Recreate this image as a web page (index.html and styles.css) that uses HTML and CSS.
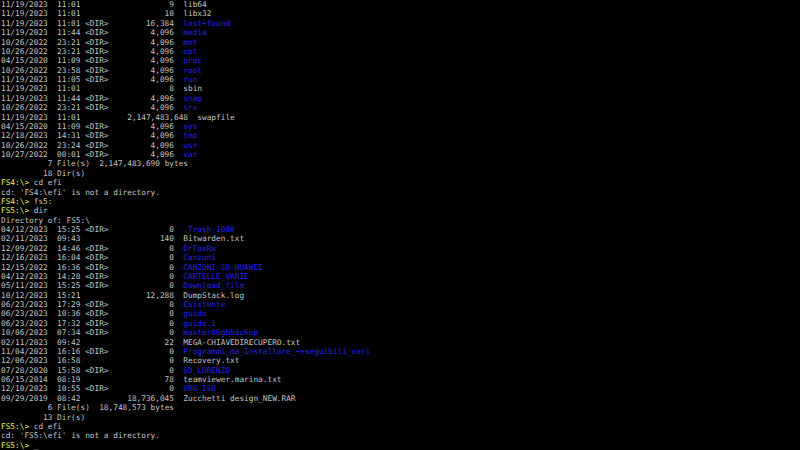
FILE: index.html
```html
<!DOCTYPE html>
<html lang="en">
<head>
    <meta charset="UTF-8">
    <meta name="viewport" content="width=device-width, initial-scale=1.0">
    <title>UEFI Shell</title>
    <link rel="stylesheet" href="styles.css">
</head>
<body>
    <div class="console">
        <!-- tail of FS4: listing -->
        <div class="entry"><span class="date">11/19/2023</span><span class="time">11:01</span><span class="type"></span><span class="size">9</span><span class="name">lib64</span></div>
        <div class="entry"><span class="date">11/19/2023</span><span class="time">11:01</span><span class="type"></span><span class="size">10</span><span class="name">libx32</span></div>
        <div class="entry dir"><span class="date">11/19/2023</span><span class="time">11:01</span><span class="type">&lt;DIR&gt;</span><span class="size">16,384</span><span class="name">lost+found</span></div>
        <div class="entry dir"><span class="date">11/19/2023</span><span class="time">11:44</span><span class="type">&lt;DIR&gt;</span><span class="size">4,096</span><span class="name">media</span></div>
        <div class="entry dir"><span class="date">10/26/2022</span><span class="time">23:21</span><span class="type">&lt;DIR&gt;</span><span class="size">4,096</span><span class="name">mnt</span></div>
        <div class="entry dir"><span class="date">10/26/2022</span><span class="time">23:21</span><span class="type">&lt;DIR&gt;</span><span class="size">4,096</span><span class="name">opt</span></div>
        <div class="entry dir"><span class="date">04/15/2020</span><span class="time">11:09</span><span class="type">&lt;DIR&gt;</span><span class="size">4,096</span><span class="name">proc</span></div>
        <div class="entry dir"><span class="date">10/26/2022</span><span class="time">23:58</span><span class="type">&lt;DIR&gt;</span><span class="size">4,096</span><span class="name">root</span></div>
        <div class="entry dir"><span class="date">11/19/2023</span><span class="time">11:05</span><span class="type">&lt;DIR&gt;</span><span class="size">4,096</span><span class="name">run</span></div>
        <div class="entry"><span class="date">11/19/2023</span><span class="time">11:01</span><span class="type"></span><span class="size">8</span><span class="name">sbin</span></div>
        <div class="entry dir"><span class="date">11/19/2023</span><span class="time">11:44</span><span class="type">&lt;DIR&gt;</span><span class="size">4,096</span><span class="name">snap</span></div>
        <div class="entry dir"><span class="date">10/26/2022</span><span class="time">23:21</span><span class="type">&lt;DIR&gt;</span><span class="size">4,096</span><span class="name">srv</span></div>
        <div class="entry"><span class="date">11/19/2023</span><span class="time">11:01</span><span class="type"></span><span class="size wide">2,147,483,648</span><span class="name">swapfile</span></div>
        <div class="entry dir"><span class="date">04/15/2020</span><span class="time">11:09</span><span class="type">&lt;DIR&gt;</span><span class="size">4,096</span><span class="name">sys</span></div>
        <div class="entry dir"><span class="date">12/18/2023</span><span class="time">14:31</span><span class="type">&lt;DIR&gt;</span><span class="size">4,096</span><span class="name">tmp</span></div>
        <div class="entry dir"><span class="date">10/26/2022</span><span class="time">23:24</span><span class="type">&lt;DIR&gt;</span><span class="size">4,096</span><span class="name">usr</span></div>
        <div class="entry dir"><span class="date">10/27/2022</span><span class="time">00:01</span><span class="type">&lt;DIR&gt;</span><span class="size">4,096</span><span class="name">var</span></div>
        <div class="line"><span class="count">7</span> File(s)  2,147,483,690 bytes</div>
        <div class="line"><span class="count">18</span> Dir(s)</div>

        <div class="line"><span class="prompt">FS4:\&gt;</span> cd efi</div>
        <div class="line">cd: 'FS4:\efi' is not a directory.</div>
        <div class="line"><span class="prompt">FS4:\&gt;</span> fs5:</div>
        <div class="line"><span class="prompt">FS5:\&gt;</span> dir</div>
        <div class="line">Directory of: FS5:\</div>

        <!-- FS5: listing -->
        <div class="entry dir"><span class="date">04/12/2023</span><span class="time">15:25</span><span class="type">&lt;DIR&gt;</span><span class="size">0</span><span class="name">.Trash-1000</span></div>
        <div class="entry"><span class="date">02/11/2023</span><span class="time">09:43</span><span class="type"></span><span class="size">140</span><span class="name">Bitwarden.txt</span></div>
        <div class="entry dir"><span class="date">12/09/2022</span><span class="time">14:46</span><span class="type">&lt;DIR&gt;</span><span class="size">0</span><span class="name">BrFaxRx</span></div>
        <div class="entry dir"><span class="date">12/16/2023</span><span class="time">16:04</span><span class="type">&lt;DIR&gt;</span><span class="size">0</span><span class="name">Canzoni</span></div>
        <div class="entry dir"><span class="date">12/15/2022</span><span class="time">16:36</span><span class="type">&lt;DIR&gt;</span><span class="size">0</span><span class="name">CANZONI-SD-HUAWEI</span></div>
        <div class="entry dir"><span class="date">04/12/2023</span><span class="time">14:28</span><span class="type">&lt;DIR&gt;</span><span class="size">0</span><span class="name">CARTELLE_VARIE</span></div>
        <div class="entry dir"><span class="date">05/11/2023</span><span class="time">15:25</span><span class="type">&lt;DIR&gt;</span><span class="size">0</span><span class="name">Download_film</span></div>
        <div class="entry"><span class="date">10/12/2023</span><span class="time">15:21</span><span class="type"></span><span class="size">12,288</span><span class="name">DumpStack.log</span></div>
        <div class="entry dir"><span class="date">06/23/2023</span><span class="time">17:29</span><span class="type">&lt;DIR&gt;</span><span class="size">0</span><span class="name">Esistente</span></div>
        <div class="entry dir"><span class="date">06/23/2023</span><span class="time">10:36</span><span class="type">&lt;DIR&gt;</span><span class="size">0</span><span class="name">guido</span></div>
        <div class="entry dir"><span class="date">06/23/2023</span><span class="time">17:32</span><span class="type">&lt;DIR&gt;</span><span class="size">0</span><span class="name">guido.1</span></div>
        <div class="entry dir"><span class="date">10/06/2023</span><span class="time">07:34</span><span class="type">&lt;DIR&gt;</span><span class="size">0</span><span class="name">maxtor80gbbackup</span></div>
        <div class="entry"><span class="date">02/11/2023</span><span class="time">09:42</span><span class="type"></span><span class="size">22</span><span class="name">MEGA-CHIAVEDIRECUPERO.txt</span></div>
        <div class="entry dir"><span class="date">11/04/2023</span><span class="time">16:16</span><span class="type">&lt;DIR&gt;</span><span class="size">0</span><span class="name">Programmi_da_Installare_+eseguibili_vari</span></div>
        <div class="entry"><span class="date">12/06/2023</span><span class="time">16:58</span><span class="type"></span><span class="size">0</span><span class="name">Recovery.txt</span></div>
        <div class="entry dir"><span class="date">07/28/2020</span><span class="time">15:58</span><span class="type">&lt;DIR&gt;</span><span class="size">0</span><span class="name">SD_LORENZO</span></div>
        <div class="entry"><span class="date">06/15/2014</span><span class="time">08:19</span><span class="type"></span><span class="size">78</span><span class="name">teamviewer.marina.txt</span></div>
        <div class="entry dir"><span class="date">12/10/2023</span><span class="time">10:55</span><span class="type">&lt;DIR&gt;</span><span class="size">0</span><span class="name">VBG_ISO</span></div>
        <div class="entry"><span class="date">09/29/2019</span><span class="time">08:42</span><span class="type"></span><span class="size">18,736,045</span><span class="name">Zucchetti design_NEW.RAR</span></div>
        <div class="line"><span class="count">6</span> File(s)  18,748,573 bytes</div>
        <div class="line"><span class="count">13</span> Dir(s)</div>

        <div class="line"><span class="prompt">FS5:\&gt;</span> cd efi</div>
        <div class="line">cd: 'FS5:\efi' is not a directory.</div>
        <div class="line"><span class="prompt">FS5:\&gt;</span> <span class="cursor">_</span></div>
    </div>
</body>
</html>
```

FILE: styles.css
```css
body {
    margin: 0;
    background-color: #000;
    height: 450px;
    overflow: hidden;
}

/* 170 x 48 character cells */
.console {
    font-family: "DejaVu Sans Mono", monospace;
    font-size: 7.78px;
    line-height: 9.375px;
    color: #c4c4c4;
    padding-left: 1px;
}

.line,
.entry {
    height: 9.375px;
    white-space: pre;
}

.entry {
    display: flex;
}

.date {
    width: 10ch;
    margin-right: 2ch;
}

.time {
    width: 5ch;
    margin-right: 1ch;
}

.type {
    width: 5ch;
}

.size {
    width: 14ch;
    margin-right: 2ch;
    text-align: right;
}

.size.wide {
    width: 17ch;
}

.dir .name {
    color: #2424f0;
}

.count {
    display: inline-block;
    width: 11ch;
    text-align: right;
}

.prompt {
    color: #f2f252;
}
```
